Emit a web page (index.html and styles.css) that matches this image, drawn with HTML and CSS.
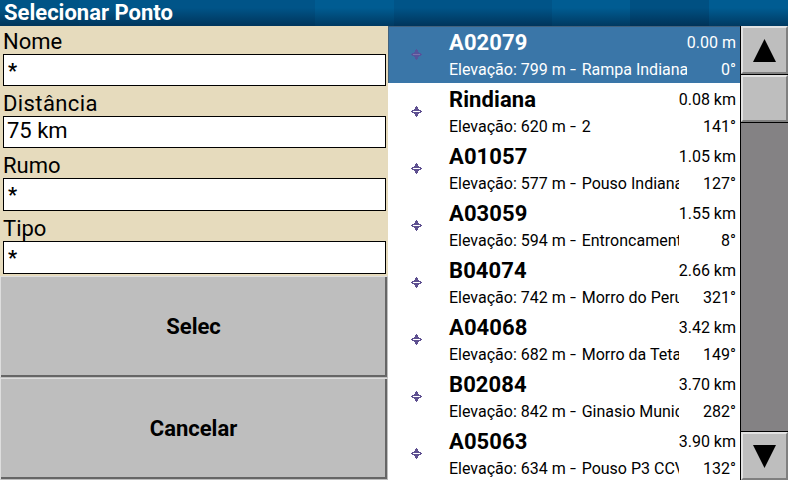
FILE: index.html
```html
<!DOCTYPE html>
<html lang="pt">
<head>
<meta charset="utf-8">
<title>Selecionar Ponto</title>
<link rel="stylesheet" href="styles.css">
</head>
<body>
<svg width="0" height="0" class="defs" aria-hidden="true">
  <symbol id="turnpoint" viewBox="0 0 11 11">
    <path fill="currentColor" d="M5 0h1v1h1v2h1v1h2v1h1v1h-1v1h-2v1h-1v2h-1v1h-1v-1h-1v-2h-1v-1h-2v-1h-1v-1h1v-1h2v-1h1v-2h1z"/>
    <path class="slot" d="M2 5h7v1h-7z"/>
  </symbol>
</svg>
<header class="title"><span>Selecionar Ponto</span></header>
<main class="dialog">
  <section class="filters">
    <form class="fields">
      <label class="label">Nome</label><div class="input any">*</div>
      <label class="label wide">Distância</label><div class="input raised">75 km</div>
      <label class="label">Rumo</label><div class="input any tall">*</div>
      <label class="label">Tipo</label><div class="input any tall">*</div>
    </form>
    <button class="btn">Selec</button>
    <button class="btn">Cancelar</button>
  </section>
  <ul class="list">
    <li class="row selected"><svg class="icon"><use href="#turnpoint"/></svg><b class="name">A02079</b><span class="dist">0.00 m</span><span class="info">Elevação: 799 m <i>-</i> Rampa Indiana</span><span class="deg">0°</span></li>
    <li class="row"><svg class="icon"><use href="#turnpoint"/></svg><b class="name">Rindiana</b><span class="dist">0.08 km</span><span class="info">Elevação: 620 m <i>-</i> 2</span><span class="deg">141°</span></li>
    <li class="row"><svg class="icon"><use href="#turnpoint"/></svg><b class="name">A01057</b><span class="dist">1.05 km</span><span class="info">Elevação: 577 m <i>-</i> Pouso Indiana</span><span class="deg">127°</span></li>
    <li class="row"><svg class="icon"><use href="#turnpoint"/></svg><b class="name">A03059</b><span class="dist">1.55 km</span><span class="info">Elevação: 594 m <i>-</i> Entroncament</span><span class="deg">8°</span></li>
    <li class="row"><svg class="icon"><use href="#turnpoint"/></svg><b class="name">B04074</b><span class="dist">2.66 km</span><span class="info">Elevação: 742 m <i>-</i> Morro do Peru</span><span class="deg">321°</span></li>
    <li class="row"><svg class="icon"><use href="#turnpoint"/></svg><b class="name">A04068</b><span class="dist">3.42 km</span><span class="info">Elevação: 682 m <i>-</i> Morro da Teta</span><span class="deg">149°</span></li>
    <li class="row"><svg class="icon"><use href="#turnpoint"/></svg><b class="name">B02084</b><span class="dist">3.70 km</span><span class="info">Elevação: 842 m <i>-</i> Ginasio Munic</span><span class="deg">282°</span></li>
    <li class="row"><svg class="icon"><use href="#turnpoint"/></svg><b class="name">A05063</b><span class="dist">3.90 km</span><span class="info">Elevação: 634 m <i>-</i> Pouso P3 CCV</span><span class="deg">132°</span></li>
  </ul>
  <aside class="scroll">
    <div class="sbtn"><svg width="23" height="23" viewBox="0 0 23 23"><path d="M11.5 0L23 23H0z"/></svg></div>
    <div class="sbtn thumb"></div>
    <div class="track"></div>
    <div class="sbtn down"><svg width="23" height="23" viewBox="0 0 23 23"><path d="M0 0H23L11.5 23z"/></svg></div>
  </aside>
</main>
</body>
</html>
```

FILE: styles.css
```css
* { box-sizing: border-box; }
body { margin: 0; width: 788px; height: 480px; overflow: hidden; display: flex; flex-direction: column; font-family: Roboto, sans-serif; color: #000; background: #fff; }
.defs { position: absolute; }
.title {
  height: 26px; flex: none; padding-left: 4px; color: #fff; font-weight: 700; font-size: 22px; line-height: 26px; white-space: nowrap;
  background:
    linear-gradient(rgba(0,0,0,0) 30%, rgba(0,10,30,.42)),
    linear-gradient(90deg, #005486 0 79px, #00568a 79px 158px, #005488 158px 315px, #005c92 315px 394px, #005488 394px 552px, #005c92 552px 630px, #005082 630px 709px, #005c92 709px);
}
.dialog { height: 454px; display: flex; }
.filters { width: 388px; background: #e6dbbd; display: flex; flex-direction: column; flex: none; }
.fields { height: 250px; padding: 0 2px 0 3px; flex: none; }
.label { display: block; height: 30px; margin-top: -2px; padding-top: 5px; line-height: 26px; font-size: 22px; }
.label:first-child { height: 28px; margin-top: 0; padding-top: 3px; }
.wide { letter-spacing: .4px; }
.input { width: 383px; height: 32px; margin-bottom: 2px; border: 1px solid #000; background: #fff; padding-left: 3px; font-size: 22px; line-height: 31px; }
.any { padding-left: 4px; font-weight: 700; font-size: 20px; line-height: 33px; }
.raised { line-height: 27px; }
.tall { height: 33px; }
.btn {
  height: 102px; flex: none; font: 700 22px Roboto, sans-serif; color: #000; background: #bebebe; padding: 0 1px 2px 0;
  border: 1px solid; border-color: #dedede #bebebe #bebebe #dedede; box-shadow: inset -2px -2px #666;
}
.list { margin: 0; padding: 0; list-style: none; width: 352px; flex: none; overflow: hidden; }
.row { height: 57px; display: grid; grid-template-columns: 61px minmax(0, 1fr) auto; grid-template-rows: 31px 26px; padding-right: 4px; }
.icon { grid-row: 1 / 3; width: 11px; height: 11px; margin: 23px 0 0 23px; color: #5e5090; }
.slot { fill: var(--slot, #fff); }
.selected { background: #3a76a8; color: #fff; box-shadow: inset 1px 1px #42617c; }
.selected .icon { color: #55549c; --slot: #7d70ac; }
.name { font-size: 22px; line-height: 33px; letter-spacing: .1px; }
.dist { font-size: 16px; line-height: 33px; text-align: right; }
.info { font-size: 16px; line-height: 25px; white-space: nowrap; overflow: hidden; }
.info i { display: inline-block; width: 8px; font-style: normal; transform: scaleX(1.35); transform-origin: 0 50%; }
.deg { font-size: 16px; line-height: 25px; text-align: right; }
.scroll { width: 48px; border-left: 1px solid #000; display: flex; flex-direction: column; }
.sbtn { height: 48px; flex: none; background: #bebebe; border: 2px solid; border-color: #e2e2e2 #808080 #808080 #e2e2e2; display: flex; align-items: center; justify-content: center; }
.thumb { height: 47px; box-shadow: 0 -1px #000; margin-top: 1px; }
.track { flex: 1; background: #848284; border: solid #000; border-width: 1px 0; }
```
